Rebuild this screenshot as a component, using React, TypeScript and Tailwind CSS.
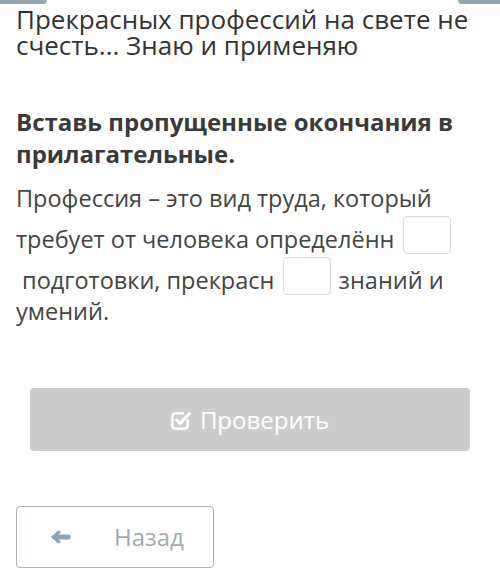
import React from "react";

function Blank() {
  return (
    <span className="inline-block w-[48px] h-[38px] mt-[2px] align-[-6px] border border-[#d9dcdd] rounded-[4px] bg-white mx-[2px]" />
  );
}

function ArrowLeft() {
  return (
    <svg width="21" height="14" viewBox="0 0 21 14" className="text-[#8fa4b2]">
      <path
        d="M0.8 7 L8 0.8 Q9 0 9.9 0.9 L10.4 1.4 Q11.2 2.3 10.3 3.1 L8 4.6 H19 Q20.6 4.6 20.6 6.2 V7.8 Q20.6 9.4 19 9.4 H8 L10.3 10.9 Q11.2 11.7 10.4 12.6 L9.9 13.1 Q9 14 8 13.2 Z"
        fill="currentColor"
      />
    </svg>
  );
}

function CheckSquare() {
  return (
    <svg width="20" height="20" viewBox="0 0 20 20" fill="none" stroke="currentColor" className="shrink-0">
      <path d="M16.6 10.5 V15.6 Q16.6 18.6 13.6 18.6 H4.4 Q1.4 18.6 1.4 15.6 V6.4 Q1.4 3.4 4.4 3.4 H12" strokeWidth="2.4" strokeLinecap="round" />
      <path d="M5.6 10 L9.2 13.4 L18.4 3.6" strokeWidth="3" strokeLinecap="round" strokeLinejoin="round" />
    </svg>
  );
}

export default function App() {
  return (
    <div className="w-[500px] h-[578px] bg-white overflow-hidden relative" style={{ fontFamily: '"Open Sans", "Noto Sans", sans-serif' }}>
      <div className="flex justify-between h-[4px]">
        <div className="w-[47px] h-[4px] bg-[#93a6b1] rounded-br-[4px]" />
        <div className="w-[42px] h-[4px] bg-[#93a6b1] rounded-bl-[4px]" />
      </div>
      <div className="px-4">
        <h1 className="mt-[2px] text-[26px] leading-[26px] text-[#333] font-normal">
          Прекрасных профессий на свете не счесть... Знаю и применяю
        </h1>
        <h2 className="mt-[48px] text-[24px] leading-[32px] font-bold text-[#3a3a3a]">
          Вставь пропущенные окончания в прилагательные.
        </h2>
        <p className="mt-[13px] text-[23.5px] leading-[31px] text-[#444]">
          Профессия – это вид труда, который требует от человека определённ <Blank />
          <br />
          {"\u00a0"}подготовки, прекрасн <Blank /> знаний и умений.
        </p>
      </div>
      <div className="mt-[61px] mx-[30px] h-[63px] rounded-[4px] bg-[#cccccc] flex items-center justify-center gap-[9px] text-white">
        <CheckSquare />
        <span className="text-[24px] leading-none">Проверить</span>
      </div>
      <div className="mt-[55px] ml-4 w-[198px] h-[62px] rounded-[4px] border border-[#a9b4ba] flex items-center">
        <span className="ml-[33px] flex">
          <ArrowLeft />
        </span>
        <span className="ml-[43px] text-[24px] leading-none text-[#a2abb0]">Назад</span>
      </div>
    </div>
  );
}
